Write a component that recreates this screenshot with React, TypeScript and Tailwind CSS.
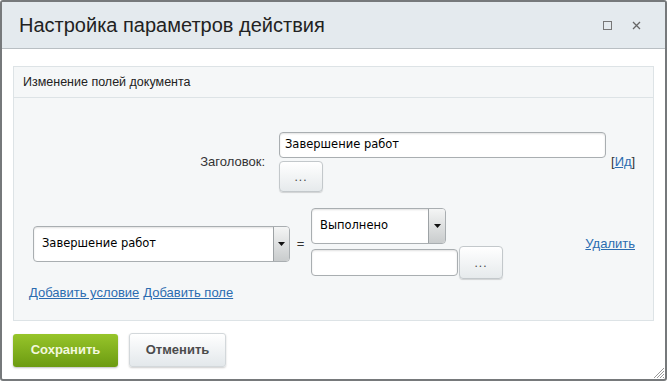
import { useState } from 'react'

const dots = (
    <button className="flex h-full w-full items-center justify-center rounded-[4px] border border-[#c3c8cb] bg-gradient-to-b from-[#ffffff] to-[#e6eaec] text-[12px] leading-none tracking-[1px] text-[#444] shadow-[0_1px_1px_rgba(0,0,0,0.15)]">
        ...
    </button>
)

function SelectBox({ value, width, arrowWidth }: { value: string; width: string; arrowWidth: string }) {
    return (
        <div
            className={`flex h-full ${width} items-stretch overflow-hidden rounded-[4px] border border-[#a9aeb1] bg-white shadow-[inset_0_1px_2px_rgba(0,0,0,0.12)]`}
        >
            <div className="flex flex-1 items-center pl-[8px] font-['DejaVu_Sans',sans-serif] text-[11.5px] text-black">
                {value}
            </div>
            <div
                className={`flex ${arrowWidth} items-center justify-center border-l border-[#9da2a5] bg-gradient-to-b from-[#f4f5f5] to-[#c9cccd]`}
            >
                <svg width="7" height="4" viewBox="0 0 7 4">
                    <path d="M0 0 L7 0 L3.5 4 Z" fill="#111" />
                </svg>
            </div>
        </div>
    )
}

export default function App() {
    const [title] = useState('Завершение работ')

    return (
        <div className="relative flex h-[381px] w-[667px] flex-col overflow-hidden rounded-[3px] border-2 border-[#76797b] bg-white font-['Liberation_Sans',Arial,sans-serif]">
            {/* header */}
            <div className="flex h-[47px] shrink-0 items-center justify-between border-b border-[#b9bfc3] bg-[#e4eaee] pl-[17px] pr-[24px]">
                <h1 className="text-[20px] leading-none text-[#222]">Настройка параметров действия</h1>
                <div className="flex items-center gap-[20px]">
                    <svg width="9" height="9" viewBox="0 0 9 9">
                        <rect x="0.5" y="0.5" width="8" height="8" fill="none" stroke="#777" />
                    </svg>
                    <svg width="9" height="9" viewBox="0 0 9 9">
                        <path d="M1 1 L8 8 M8 1 L1 8" stroke="#666" strokeWidth="1.3" />
                    </svg>
                </div>
            </div>

            {/* body */}
            <div className="flex flex-1 flex-col px-[11px] pt-[17px]">
                <div className="flex h-[255px] flex-col border border-[#dde3e6] bg-[#f5f7f8]">
                    <div className="flex h-[31px] items-center border-b border-[#dde3e6] pl-[9px] text-[12.5px] text-[#222]">
                        Изменение полей документа
                    </div>

                    {/* title row */}
                    <div className="mt-[34px] flex items-center">
                        <div className="w-[265px] pr-[14px] text-right text-[13px] text-[#333]">Заголовок:</div>
                        <div className="flex flex-col gap-[3px]">
                            <div className="flex h-[26px] w-[327px] items-center rounded-[4px] border border-[#a9aeb1] bg-white pl-[5px] font-['DejaVu_Sans',sans-serif] text-[11.5px] text-black shadow-[inset_0_1px_2px_rgba(0,0,0,0.12)]">
                                {title}
                            </div>
                            <div className="h-[31px] w-[44px]">{dots}</div>
                        </div>
                        <div className="ml-[5px] text-[13px] text-[#333]">
                            [<a className="text-[#2b6cb0] underline">Ид</a>]
                        </div>
                    </div>

                    {/* condition row */}
                    <div className="mt-[16px] flex items-center pl-[19px] pr-[18px]">
                        <div className="h-[36px]">
                            <SelectBox value="Завершение работ" width="w-[257px]" arrowWidth="w-[16px]" />
                        </div>
                        <div className="w-[21px] text-center text-[13px] text-[#333]">=</div>
                        <div className="flex flex-col">
                            <div className="h-[36px]">
                                <SelectBox value="Выполнено" width="w-[135px]" arrowWidth="w-[17px]" />
                            </div>
                            <div className="mt-[2px] flex items-center">
                                <div className="h-[27px] w-[147px] rounded-[4px] border border-[#a9aeb1] bg-white shadow-[inset_0_1px_2px_rgba(0,0,0,0.12)]" />
                                <div className="ml-[1px] h-[33px] w-[44px]">{dots}</div>
                            </div>
                        </div>
                        <a className="ml-auto text-[13px] text-[#2b6cb0] underline">Удалить</a>
                    </div>

                    {/* links */}
                    <div className="mt-[4px] flex gap-[4px] pl-[15px] text-[13px]">
                        <a className="text-[#2b6cb0] underline">Добавить условие</a>
                        <a className="text-[#2b6cb0] underline">Добавить поле</a>
                    </div>
                </div>

                {/* buttons */}
                <div className="mt-[12px] flex items-center gap-[11px]">
                    <button className="h-[33px] w-[105px] rounded-[3px] bg-gradient-to-b from-[#97c52a] to-[#6c9b10] text-[13px] font-bold text-[#f3f8de] shadow-[0_1px_2px_rgba(0,0,0,0.25)]">
                        Сохранить
                    </button>
                    <button className="h-[34px] w-[97px] rounded-[3px] border border-[#d3d8db] bg-gradient-to-b from-[#ffffff] to-[#e3e8eb] text-[13px] font-bold text-[#4b4b4b] shadow-[0_1px_2px_rgba(0,0,0,0.2)]">
                        Отменить
                    </button>
                </div>
            </div>

            {/* resize grip */}
            <svg className="absolute bottom-0 right-0" width="14" height="14" viewBox="0 0 14 14">
                <path d="M13 3 L3 13 M13 6 L6 13 M13 9 L9 13 M13 12 L12 13" stroke="#999" strokeWidth="1" />
            </svg>
        </div>
    )
}
